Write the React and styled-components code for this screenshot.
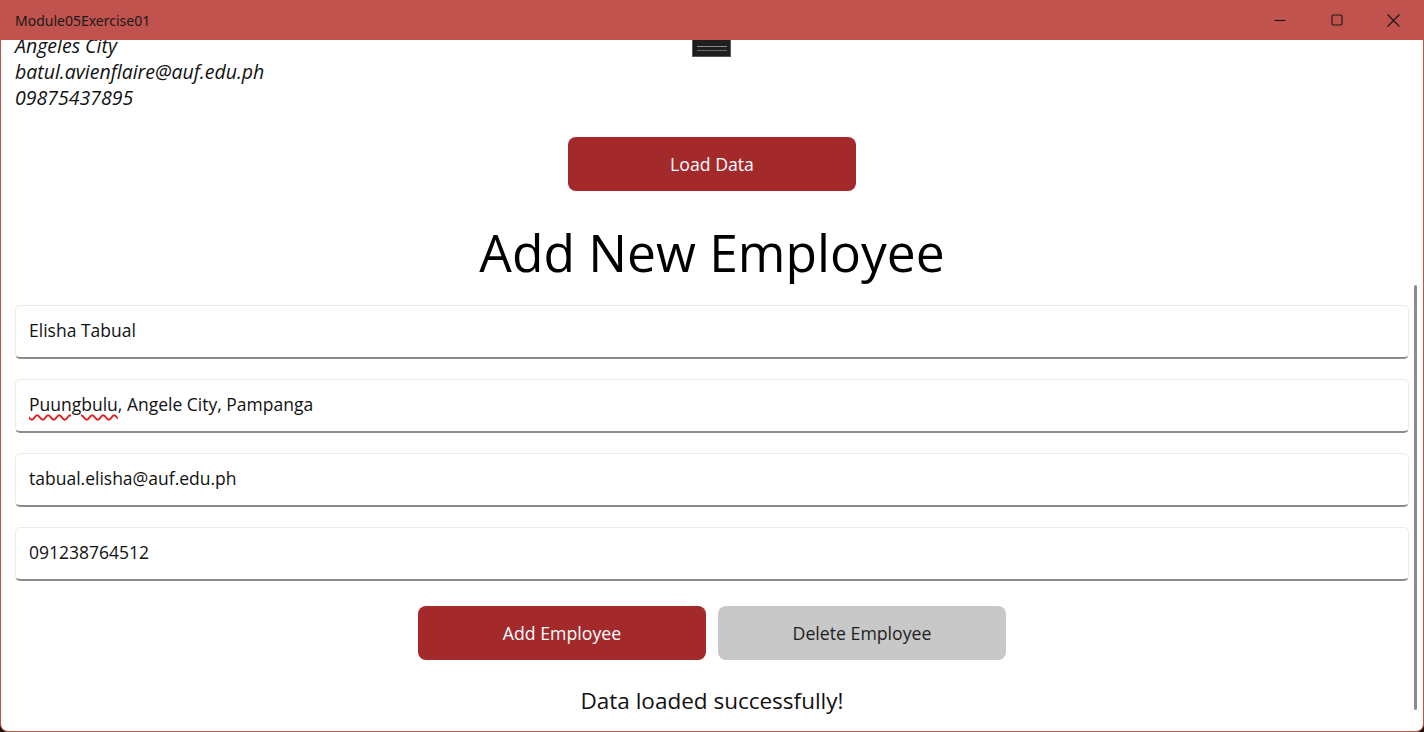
import React, { useState } from "react";
import styled, { createGlobalStyle } from "styled-components";

const GlobalStyle = createGlobalStyle`
  html, body {
    margin: 0;
    padding: 0;
    background: #111;
  }
  * { box-sizing: border-box; }
`;

const Window = styled.div`
  position: relative;
  width: 1424px;
  height: 732px;
  background: #ffffff;
  border: 1px solid #c0534e;
  border-top: none;
  border-radius: 0 0 8px 8px;
  overflow: hidden;
  display: flex;
  flex-direction: column;
  font-family: "Open Sans", "Noto Sans", sans-serif;
`;

const TitleBar = styled.div`
  height: 40px;
  flex-shrink: 0;
  background: #c0534e;
  display: flex;
  align-items: center;
  padding-left: 15px;
  padding-right: 2px;
  margin: 0 -1px;
`;

const TitleText = styled.div`
  flex: 1;
  font-family: "Noto Sans", "Open Sans", sans-serif;
  font-size: 14px;
  color: #1a1a1a;
`;

const Controls = styled.div`
  display: flex;
  height: 100%;
`;

const ControlButton = styled.div`
  width: 57px;
  height: 100%;
  display: flex;
  align-items: center;
  justify-content: center;
  color: #1a1a1a;
`;

const DragHandle = styled.div`
  position: absolute;
  top: 40px;
  left: 691px;
  width: 39px;
  height: 17px;
  background: #1f1f1f;
  border: 1px solid #5a5a5a;
  border-top: none;
  display: flex;
  align-items: center;
  justify-content: center;

  &::after {
    content: "";
    width: 30px;
    height: 3px;
    border-top: 1px solid #8a8a8a;
    border-bottom: 1px solid #6a6a6a;
  }
`;

const Content = styled.div`
  flex: 1;
  overflow: hidden;
  padding: 0 14px 0 14px;
  display: flex;
  flex-direction: column;
`;

const InfoBlock = styled.div`
  margin-top: -7px;
  display: flex;
  flex-direction: column;
`;

const InfoLine = styled.div`
  font-style: italic;
  font-size: 19.5px;
  line-height: 26px;
  color: #111;
`;

const Button = styled.button`
  width: 288px;
  height: 54px;
  border: none;
  border-radius: 8px;
  font-family: "Open Sans", "Noto Sans", sans-serif;
  font-size: 17.7px;
  cursor: pointer;
  background: ${(p) => (p.$variant === "gray" ? "#c8c8c8" : "#a4292b")};
  color: ${(p) => (p.$variant === "gray" ? "#1e1e1e" : "#ffffff")};
`;

const Centered = styled.div`
  display: flex;
  justify-content: center;
  gap: 12px;
  margin-top: ${(p) => p.$mt || 0}px;
`;

const Heading = styled.h1`
  margin: 27px 0 19px;
  text-align: center;
  font-size: 51.5px;
  font-weight: 400;
  line-height: 68px;
  color: #000;
`;

const Fields = styled.div`
  display: flex;
  flex-direction: column;
  gap: 20px;
`;

const Field = styled.div`
  height: 54px;
  border: 1px solid #ececec;
  border-bottom: 2px solid #8c8c8c;
  border-radius: 5px;
  display: flex;
  align-items: center;
  padding: 0 13px 3px;
  font-size: 17.5px;
  color: #111;
`;

const Misspelled = styled.span`
  text-decoration: underline wavy #e02020;
  text-decoration-thickness: 1.5px;
  text-underline-offset: 3px;
`;

const Status = styled.div`
  margin-top: 25px;
  text-align: center;
  font-size: 22.5px;
  color: #111;
`;

const ScrollThumb = styled.div`
  position: absolute;
  left: 1413px;
  top: 285px;
  width: 3px;
  height: 425px;
  border-radius: 2px;
  background: #8b8b8b;
`;

export default function App() {
  const [employee] = useState({
    name: "Elisha Tabual",
    email: "tabual.elisha@auf.edu.ph",
    phone: "091238764512",
  });

  return (
    <>
      <GlobalStyle />
      <Window>
        <TitleBar>
          <TitleText>Module05Exercise01</TitleText>
          <Controls>
            <ControlButton>
              <svg width="12" height="12" viewBox="0 0 12 12">
                <line x1="0.5" y1="6.5" x2="11.5" y2="6.5" stroke="currentColor" strokeWidth="1.1" />
              </svg>
            </ControlButton>
            <ControlButton>
              <svg width="12" height="12" viewBox="0 0 12 12">
                <rect x="1" y="1" width="10" height="10" rx="1.2" fill="none" stroke="currentColor" strokeWidth="1.1" />
              </svg>
            </ControlButton>
            <ControlButton>
              <svg width="13" height="13" viewBox="0 0 12 12">
                <path d="M0.5 0.5 L11.5 11.5 M11.5 0.5 L0.5 11.5" stroke="currentColor" strokeWidth="1.1" />
              </svg>
            </ControlButton>
          </Controls>
        </TitleBar>

        <Content>
          <InfoBlock>
            <InfoLine>Angeles City</InfoLine>
            <InfoLine>batul.avienflaire@auf.edu.ph</InfoLine>
            <InfoLine>09875437895</InfoLine>
          </InfoBlock>

          <Centered $mt={26}>
            <Button>Load Data</Button>
          </Centered>

          <Heading>Add New Employee</Heading>

          <Fields>
            <Field>{employee.name}</Field>
            <Field>
              <Misspelled>Puungbulu</Misspelled>, Angele City, Pampanga
            </Field>
            <Field>{employee.email}</Field>
            <Field>{employee.phone}</Field>
          </Fields>

          <Centered $mt={25}>
            <Button>Add Employee</Button>
            <Button $variant="gray">Delete Employee</Button>
          </Centered>

          <Status>Data loaded successfully!</Status>
        </Content>

        <DragHandle />
        <ScrollThumb />
      </Window>
    </>
  );
}
